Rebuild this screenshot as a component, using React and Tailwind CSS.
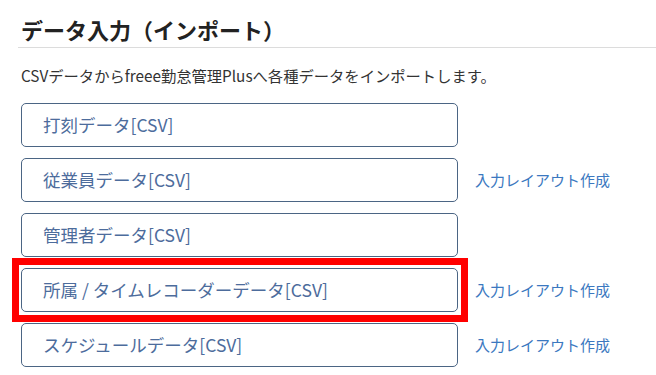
const rows = [
  { label: "打刻データ[CSV]", layout: false },
  { label: "従業員データ[CSV]", layout: true },
  { label: "管理者データ[CSV]", layout: false },
  { label: "所属 / タイムレコーダーデータ[CSV]", layout: true, marked: true },
  { label: "スケジュールデータ[CSV]", layout: true },
];

function ImportRow({ label, layout, marked }) {
  return (
    <li className="flex items-center">
      <div className="relative">
        {marked && (
          <div className="absolute -left-[9px] -top-[10px] w-[456px] h-[64px] border-[7px] border-[#ff0000] pointer-events-none" />
        )}
        <button className="w-[437px] h-[44px] border border-[#4b6584] rounded-[5px] bg-white pl-[21px] text-left text-[17.5px] text-[#4d6c9c] leading-none">
          {label}
        </button>
      </div>
      {layout && (
        <a className="ml-[17px] text-[15px] text-[#3b78c0] cursor-pointer">
          入力レイアウト作成
        </a>
      )}
    </li>
  );
}

export default function App() {
  return (
    <div className="w-[656px] h-[375px] overflow-hidden bg-white font-['Noto_Sans_CJK_JP','Noto_Sans',sans-serif]">
      <div className="ml-[18px] pt-[13px] pb-[2px] border-b border-[#dcdcdc]">
        <h2 className="pl-[3px] text-[22px] font-bold leading-[32px] text-[#222]">
          データ入力（インポート）
        </h2>
      </div>
      <p className="ml-[21px] mt-[15px] text-[15.3px] leading-[24px] text-[#333]">
        CSVデータからfreee勤怠管理Plusへ各種データをインポートします。
      </p>
      <ul className="ml-[21px] mt-[16px] flex flex-col gap-[11px]">
        {rows.map((r) => (
          <ImportRow key={r.label} {...r} />
        ))}
      </ul>
    </div>
  );
}
